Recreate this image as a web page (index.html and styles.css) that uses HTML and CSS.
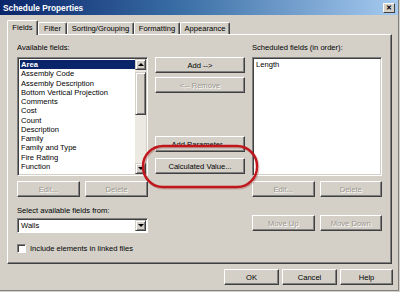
FILE: index.html
```html
<!DOCTYPE html>
<html lang="en">
  <head>
    <meta charset="UTF-8" />
    <title>Schedule Properties</title>
    <link rel="stylesheet" href="styles.css">
  </head>
  <body>
    <div class="window">
      <div class="titlebar">
        <span class="title">Schedule Properties</span>
        <span class="close">&#x2715;</span>
      </div>

      <div class="tabs">
        <div class="tab active w-fields">Fields</div>
        <div class="tab w-filter">Filter</div>
        <div class="tab w-sort">Sorting/Grouping</div>
        <div class="tab w-format">Formatting</div>
        <div class="tab w-appear">Appearance</div>
      </div>

      <div class="panel">
        <div class="lbl lbl-left">Available fields:</div>
        <div class="lbl lbl-right">Scheduled fields (in order):</div>

        <div class="listbox list-left">
          <div class="items">
            <div class="item sel">Area</div>
            <div class="item">Assembly Code</div>
            <div class="item">Assembly Description</div>
            <div class="item">Bottom Vertical Projection</div>
            <div class="item">Comments</div>
            <div class="item">Cost</div>
            <div class="item">Count</div>
            <div class="item">Description</div>
            <div class="item">Family</div>
            <div class="item">Family and Type</div>
            <div class="item">Fire Rating</div>
            <div class="item">Function</div>
            <div class="item">Horizontal Projection</div>
          </div>
          <div class="vscroll">
            <div class="sbtn"><span class="arr-up"></span></div>
            <div class="track"><div class="thumb"></div></div>
            <div class="sbtn"><span class="arr-down"></span></div>
          </div>
        </div>

        <div class="middle">
          <div class="btn">Add --&gt;</div>
          <div class="btn off remove">&lt;-- Remove</div>
          <div class="btn addparam">Add Parameter...</div>
          <div class="btn calc">Calculated Value...</div>
        </div>

        <div class="listbox list-right">
          <div class="items">
            <div class="item">Length</div>
          </div>
        </div>

        <div class="btnrow row-left">
          <div class="btn off">Edit...</div>
          <div class="btn off">Delete</div>
        </div>
        <div class="btnrow row-right">
          <div class="btn off">Edit...</div>
          <div class="btn off">Delete</div>
        </div>

        <div class="bottom-left">
          <div class="lbl select-lbl">Select available fields from:</div>
          <div class="combo">
            <span class="combo-text">Walls</span>
            <div class="sbtn combo-btn"><span class="arr-down"></span></div>
          </div>
          <div class="check">
            <span class="box"></span>
            <span>Include elements in linked files</span>
          </div>
        </div>
        <div class="bottom-right">
          <div class="btnrow move">
            <div class="btn off">Move Up</div>
            <div class="btn off">Move Down</div>
          </div>
        </div>
      </div>

      <div class="footer">
        <div class="btn w-ok">OK</div>
        <div class="btn w-cancel">Cancel</div>
        <div class="btn w-help">Help</div>
      </div>

      <!-- red highlight drawn over the dialog -->
      <svg class="mark" width="400" height="292" viewBox="0 0 400 292">
        <rect x="143" y="146" width="114" height="41" rx="20" ry="20" fill="none" stroke="#7a1a1a" stroke-opacity="0.25" stroke-width="3" transform="translate(1 1)" />
        <rect x="143" y="146" width="114" height="41" rx="20" ry="20" fill="none" stroke="#c0161c" stroke-width="2.4" />
      </svg>
    </div>
  </body>
</html>
```

FILE: styles.css
```css
* {
  margin: 0;
  padding: 0;
  box-sizing: border-box;
}
body {
  width: 400px;
  height: 292px;
  overflow: hidden;
  background: #d4d0c8;
  font-family: "Liberation Sans", Arial, sans-serif;
  font-size: 7.6px;
  color: #000;
}
.window {
  position: relative;
  width: 399px;
  height: 291px;
  border-right: 1px solid #808080;
  border-bottom: 1px solid #808080;
}

/* title bar */
.titlebar {
  height: 15px;
  display: flex;
  align-items: center;
  justify-content: space-between;
  padding: 0 3px 0 3px;
  background: linear-gradient(to right, #0a246a 0%, #3a6ea5 45%, #a6caf0 100%);
}
.title {
  color: #fff;
  font-weight: bold;
  font-size: 8.3px;
}
.close {
  width: 12px;
  height: 10px;
  display: flex;
  align-items: center;
  justify-content: center;
  background: #d4d0c8;
  border: 1px solid;
  border-color: #fff #404040 #404040 #fff;
  font-size: 7px;
  font-weight: bold;
  line-height: 1;
}

/* tabs */
.tabs {
  display: flex;
  align-items: flex-end;
  height: 14px;
  margin-top: 5px;
  padding-left: 7px;
  position: relative;
  z-index: 1;
}
.tab {
  height: 12px;
  display: flex;
  align-items: center;
  justify-content: center;
  border-top: 1px solid #fff;
  border-left: 1px solid #fff;
  border-right: 1px solid #404040;
  box-shadow: inset -1px 0 #808080;
  border-radius: 2px 2px 0 0;
  background: #d4d0c8;
}
.tab.active {
  height: 15px;
  margin-bottom: -1px;
  padding-bottom: 2px;
}
.w-fields { width: 31px; }
.w-filter { width: 29px; }
.w-sort { width: 67px; }
.w-format { width: 46px; }
.w-appear { width: 50px; }

/* tab page */
.panel {
  height: 230px;
  margin: 0 6px 0 7px;
  border: 1px solid;
  border-color: #fff #404040 #404040 #fff;
  box-shadow: inset -1px -1px #808080;
  display: grid;
  grid-template-columns: 131px 90px 130px;
  grid-template-rows: 14px 119px 21px auto;
  column-gap: 7px;
  padding: 8px 0 0 9px;
}
.lbl {
  line-height: 10px;
  white-space: nowrap;
}
.lbl-left { grid-column: 1; grid-row: 1; }
.lbl-right { grid-column: 3; grid-row: 1; }
.list-left { grid-column: 1; grid-row: 2; }
.middle { grid-column: 2; grid-row: 2; }
.list-right { grid-column: 3; grid-row: 2; }
.row-left { grid-column: 1; grid-row: 3; align-self: end; }
.row-right { grid-column: 3; grid-row: 3; align-self: end; }
.bottom-left { grid-column: 1; grid-row: 4; }
.bottom-right { grid-column: 3; grid-row: 4; }

/* list boxes */
.listbox {
  display: flex;
  background: #fff;
  border: 1px solid;
  border-color: #808080 #fff #fff #808080;
  box-shadow: inset 1px 1px #404040, inset -1px -1px #d4d0c8;
  padding: 2px;
  overflow: hidden;
}
.items {
  flex: 1;
  overflow: hidden;
}
.item {
  height: 9.25px;
  line-height: 9.25px;
  padding-left: 1px;
  white-space: nowrap;
}
.item.sel {
  background: #0a246a;
  color: #fff;
  font-weight: bold;
}
.vscroll {
  width: 11px;
  display: flex;
  flex-direction: column;
  margin: -1px -1px -1px 0;
}
.sbtn {
  width: 11px;
  height: 11px;
  background: #d4d0c8;
  border: 1px solid;
  border-color: #d4d0c8 #404040 #404040 #d4d0c8;
  box-shadow: inset 1px 1px #fff, inset -1px -1px #808080;
  display: flex;
  align-items: center;
  justify-content: center;
}
.track {
  flex: 1;
  background: #ece9e3;
  padding-top: 2px;
}
.thumb {
  height: 43px;
  background: #d4d0c8;
  border: 1px solid;
  border-color: #d4d0c8 #404040 #404040 #d4d0c8;
  box-shadow: inset 1px 1px #fff, inset -1px -1px #808080;
}
.arr-up {
  width: 0;
  height: 0;
  border-left: 3px solid transparent;
  border-right: 3px solid transparent;
  border-bottom: 3px solid #000;
}
.arr-down {
  width: 0;
  height: 0;
  border-left: 3px solid transparent;
  border-right: 3px solid transparent;
  border-top: 3px solid #000;
}

/* buttons */
.btn {
  height: 16px;
  display: flex;
  align-items: center;
  justify-content: center;
  background: #d4d0c8;
  border: 1px solid;
  border-color: #fff #404040 #404040 #fff;
  box-shadow: inset -1px -1px #808080;
  white-space: nowrap;
}
.btn.off {
  color: #9a978f;
  text-shadow: 1px 1px #fff;
}
.middle {
  display: flex;
  flex-direction: column;
  padding-bottom: 2px;
}
.remove {
  margin-top: 4px;
}
.addparam {
  margin-top: auto;
}
.calc {
  margin-top: 6px;
}
.btnrow {
  display: flex;
  gap: 5px;
}
.btnrow .btn {
  flex: 1;
}
.move {
  margin-top: 18px;
}

/* lower left controls */
.select-lbl {
  margin-top: 9px;
}
.combo {
  margin-top: 2px;
  height: 15px;
  width: 131px;
  display: flex;
  align-items: center;
  background: #fff;
  border: 1px solid;
  border-color: #808080 #fff #fff #808080;
  box-shadow: inset 1px 1px #404040;
  padding: 1px;
}
.combo-text {
  flex: 1;
  padding-left: 2px;
}
.combo-btn {
  height: 11px;
}
.check {
  margin-top: 11px;
  display: flex;
  align-items: center;
  gap: 4px;
  white-space: nowrap;
}
.box {
  width: 9px;
  height: 9px;
  background: #fff;
  border: 1px solid;
  border-color: #808080 #fff #fff #808080;
  box-shadow: inset 1px 1px #404040;
}

/* dialog buttons */
.footer {
  display: flex;
  justify-content: flex-end;
  gap: 3px;
  margin-top: 5px;
  padding-right: 5px;
}
.w-ok { width: 55px; }
.w-cancel { width: 55px; }
.w-help { width: 53px; }

.mark {
  position: absolute;
  left: 0;
  top: 0;
  pointer-events: none;
}
```
